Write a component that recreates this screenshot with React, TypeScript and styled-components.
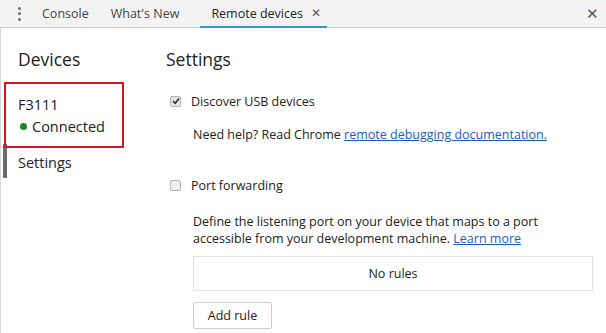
import styled, { createGlobalStyle } from 'styled-components'

const Global = createGlobalStyle`
  body {
    margin: 0;
    background: #fff;
    font-family: "Open Sans", "Noto Sans", sans-serif;
    color: #222;
  }
`

const Shell = styled.div`
  width: 606px;
  height: 333px;
  display: flex;
  flex-direction: column;
  overflow: hidden;
`

const TabBar = styled.div`
  height: 28px;
  box-sizing: border-box;
  background: #f3f3f3;
  border-bottom: 1px solid #cfcfcf;
  display: flex;
  align-items: stretch;
  font-size: 12.5px;
  color: #333;
`

const Dots = styled.div`
  width: 31px;
  padding-left: 7px;
  box-sizing: border-box;
  display: flex;
  flex-direction: column;
  align-items: center;
  justify-content: center;
  gap: 2.5px;

  > span {
    width: 3px;
    height: 3px;
    border-radius: 50%;
    background: #6e6e6e;
  }
`

const Tab = styled.div<{ active?: boolean; extra?: number }>`
  display: flex;
  align-items: center;
  gap: 8px;
  padding: 0 ${p => (p.active ? 6 : 11 + (p.extra || 0))}px 0 11px;
  margin-bottom: -1px;
  border-bottom: 2px solid ${p => (p.active ? '#2d9ad4' : 'transparent')};
  color: ${p => (p.active ? '#222' : '#444')};
`

const Spacer = styled.div`
  flex: 1;
`

const CloseX = styled.span<{ size: number }>`
  font-size: ${p => p.size}px;
  color: #555;
  line-height: 1;
`

const RightClose = styled.div`
  width: 28px;
  display: flex;
  align-items: center;
  justify-content: center;
`

const Body = styled.div`
  flex: 1;
  display: flex;
`

const Sidebar = styled.div`
  width: 146px;
  border-left: 1px solid #d6d6d6;
  padding-top: 19px;
`

const SideTitle = styled.div`
  font-size: 17.5px;
  padding-left: 17px;
  height: 35px;
`

const DeviceBox = styled.div`
  position: relative;
  z-index: 1;
  margin-left: 3px;
  width: 120px;
  box-sizing: border-box;
  height: 66px;
  border: 2px solid #d4161d;
  padding: 11px 0 0 12px;
  font-size: 14.5px;
`

const DeviceName = styled.div`
  height: 22px;
`

const Status = styled.div`
  display: flex;
  align-items: center;
  gap: 5px;
  margin-left: 2px;

  &::before {
    content: '';
    width: 7px;
    height: 7px;
    border-radius: 50%;
    background: #1c8a1c;
  }
`

const SideItem = styled.div<{ selected?: boolean }>`
  height: 34px;
  margin-top: -4px;
  display: flex;
  align-items: center;
  font-size: 14.5px;
  border-left: 4px solid ${p => (p.selected ? '#6b6b6b' : 'transparent')};
  margin-left: 2px;
  padding: 2px 0 0 11px;
  box-sizing: border-box;
`

const Main = styled.div`
  flex: 1;
  padding: 19px 0 0 19px;
`

const MainTitle = styled.div`
  font-size: 17.5px;
  height: 38px;
`

const CheckRow = styled.label`
  display: flex;
  align-items: center;
  gap: 10px;
  font-size: 12.5px;
  height: 22px;
  margin-left: 4px;
`

const Box = styled.span<{ checked?: boolean }>`
  width: 9px;
  height: 9px;
  border: 1px solid #b4b4b4;
  border-radius: 2px;
  background: ${p => (p.checked ? '#e4e4e4' : '#efefef')};
  display: flex;
  align-items: center;
  justify-content: center;
`

const Note = styled.div<{ top: number }>`
  font-size: 12.5px;
  line-height: 17px;
  padding-left: 27px;
  margin-top: ${p => p.top}px;
  color: #222;
`

const Link = styled.a`
  color: #1a5eb8;
  text-decoration: underline;
`

const Section = styled.div<{ top: number }>`
  margin-top: ${p => p.top}px;
`

const RulesBox = styled.div`
  margin: 9px 0 0 27px;
  width: 400px;
  height: 35px;
  box-sizing: border-box;
  border: 1px solid #e3e3e3;
  display: flex;
  align-items: center;
  justify-content: center;
  font-size: 12.5px;
`

const AddButton = styled.button`
  margin: 11px 0 0 27px;
  height: 27px;
  width: 79px;
  box-sizing: border-box;
  background: #fff;
  border: 1px solid #cfcfcf;
  border-radius: 2px;
  font-family: inherit;
  font-size: 12.5px;
  color: #222;
  padding: 0;
`

function App() {
  return (
    <Shell>
      <Global />
      <TabBar>
        <Dots><span /><span /><span /></Dots>
        <Tab>Console</Tab>
        <Tab extra={10}>What's New</Tab>
        <Tab active>Remote devices <CloseX size={12}>✕</CloseX></Tab>
        <Spacer />
        <RightClose><CloseX size={15}>✕</CloseX></RightClose>
      </TabBar>
      <Body>
        <Sidebar>
          <SideTitle>Devices</SideTitle>
          <DeviceBox>
            <DeviceName>F3111</DeviceName>
            <Status>Connected</Status>
          </DeviceBox>
          <SideItem selected>Settings</SideItem>
        </Sidebar>
        <Main>
          <MainTitle>Settings</MainTitle>
          <Section top={5}>
            <CheckRow>
              <Box checked>
                <svg width="8" height="8" viewBox="0 0 8 8">
                  <path d="M1 4.2 L3.2 6.3 L7 1.5" stroke="#333" strokeWidth="1.6" fill="none" />
                </svg>
              </Box>
              Discover USB devices
            </CheckRow>
            <Note top={14}>
              Need help? Read Chrome <Link>remote debugging documentation.</Link>
            </Note>
          </Section>
          <Section top={31}>
            <CheckRow>
              <Box />
              Port forwarding
            </CheckRow>
            <Note top={17}>
              Define the listening port on your device that maps to a port<br />
              accessible from your development machine. <Link>Learn more</Link>
            </Note>
            <RulesBox>No rules</RulesBox>
            <AddButton>Add rule</AddButton>
          </Section>
        </Main>
      </Body>
    </Shell>
  )
}

export default App
